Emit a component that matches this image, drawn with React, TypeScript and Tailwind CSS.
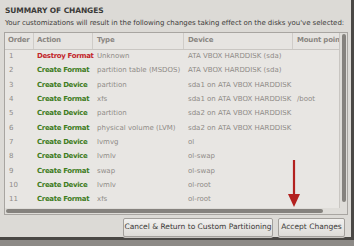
import React from "react";

const rows = [
  { order: "1", action: "Destroy Format", destroy: true, type: "Unknown", device: "ATA VBOX HARDDISK (sda)", mount: "" },
  { order: "2", action: "Create Format", type: "partition table (MSDOS)", device: "ATA VBOX HARDDISK (sda)", mount: "" },
  { order: "3", action: "Create Device", type: "partition", device: "sda1 on ATA VBOX HARDDISK", mount: "" },
  { order: "4", action: "Create Format", type: "xfs", device: "sda1 on ATA VBOX HARDDISK", mount: "/boot" },
  { order: "5", action: "Create Device", type: "partition", device: "sda2 on ATA VBOX HARDDISK", mount: "" },
  { order: "6", action: "Create Format", type: "physical volume (LVM)", device: "sda2 on ATA VBOX HARDDISK", mount: "" },
  { order: "7", action: "Create Device", type: "lvmvg", device: "ol", mount: "" },
  { order: "8", action: "Create Device", type: "lvmlv", device: "ol-swap", mount: "" },
  { order: "9", action: "Create Format", type: "swap", device: "ol-swap", mount: "" },
  { order: "10", action: "Create Device", type: "lvmlv", device: "ol-root", mount: "" },
  { order: "11", action: "Create Format", type: "xfs", device: "ol-root", mount: "" },
];

const cols = "grid grid-cols-[29px_59px_91px_109px_48px]";

const App = () => {
  return (
    <div className="relative w-[354px] h-[246px] overflow-hidden bg-[#dcdad6] font-['DejaVu_Sans',sans-serif] text-[7px] leading-none">
      <div className="flex flex-col h-[240px] border-r-[3px] border-b-[3px] border-[#4a4845]">
        <div className="pl-[5px] pt-[7px] text-[7.5px] font-bold text-[#3b3a38] tracking-[-0.1px]">
          SUMMARY OF CHANGES
        </div>
        <div className="pl-[5px] pt-[5px] text-[#3e3d3b] whitespace-nowrap tracking-[-0.05px]">
          Your customizations will result in the following changes taking effect on the disks you've selected:
        </div>

        {/* Table frame */}
        <div className="mt-[5px] ml-[4px] mr-[3px] h-[183px] border border-[#a8a5a1] bg-[#e8e6e3] flex flex-col">
          <div className="flex flex-1 min-h-0">
            <div className="flex-1 overflow-hidden">
              <div className={`${cols} h-[17px] items-center border-b border-[#c9c6c2] text-[#8a8682] font-bold bg-[#e6e4e1] tracking-[-0.2px]`}>
                <div className="pl-[3px] h-full flex items-center border-r border-[#cfccc8]">Order</div>
                <div className="pl-[3px] h-full flex items-center border-r border-[#cfccc8]">Action</div>
                <div className="pl-[4px] h-full flex items-center border-r border-[#cfccc8]">Type</div>
                <div className="pl-[4px] h-full flex items-center border-r border-[#cfccc8]">Device</div>
                <div className="pl-[4px] h-full flex items-center whitespace-nowrap overflow-hidden">Mount poin</div>
              </div>
              {rows.map((r) => (
                <div key={r.order} className={`${cols} h-[14.3px] items-center text-[#8f8b87]`}>
                  <div className="pl-[4px]">{r.order}</div>
                  <div
                    className={`pl-[3px] font-bold whitespace-nowrap tracking-[-0.35px] ${
                      r.destroy ? "text-[#c3272b]" : "text-[#3f7d1e]"
                    }`}
                  >
                    {r.action}
                  </div>
                  <div className="pl-[4px] whitespace-nowrap overflow-hidden">{r.type}</div>
                  <div className="pl-[4px] whitespace-nowrap overflow-hidden">{r.device}</div>
                  <div className="pl-[4px] whitespace-nowrap">{r.mount}</div>
                </div>
              ))}
            </div>
            {/* vertical scrollbar */}
            <div className="w-[8px] flex justify-center pt-[1px] pb-[6px] bg-[#dedcd8] border-l border-[#c9c6c2]">
              <div className="w-[4px] h-full rounded-full bg-[#85827e]" />
            </div>
          </div>
          {/* horizontal scrollbar */}
          <div className="h-[6px] flex items-center pl-[1px] pr-[24px] bg-[#dedcd8]">
            <div className="h-[4px] w-full rounded-full bg-[#85827e]" />
          </div>
        </div>

        {/* Buttons */}
        <div className="flex justify-end gap-[5px] mt-[3px] mr-[6px] text-[7.5px] text-[#3b3a38]">
          <button className="w-[150px] h-[19px] rounded-[2px] border border-[#a3a09c] bg-gradient-to-b from-[#f1f0ee] to-[#dedcd8] shadow-[0_1px_0_#c8c5c1]">
            Cancel &amp; Return to Custom Partitioning
          </button>
          <button className="w-[67px] h-[19px] rounded-[2px] border border-[#a3a09c] bg-gradient-to-b from-[#f1f0ee] to-[#dedcd8] shadow-[0_1px_0_#c8c5c1]">
            Accept Changes
          </button>
        </div>
      </div>
      <div className="h-[6px] bg-[#8d8a87]" />

      {/* red arrow */}
      <svg className="absolute left-[287px] top-[160px]" width="14" height="48" viewBox="0 0 14 48">
        <line x1="7" y1="0" x2="7" y2="38" stroke="#b3211f" strokeWidth="2.2" />
        <polygon points="1,34 13,34 7,47" fill="#b3211f" />
      </svg>
    </div>
  );
};

export default App;
